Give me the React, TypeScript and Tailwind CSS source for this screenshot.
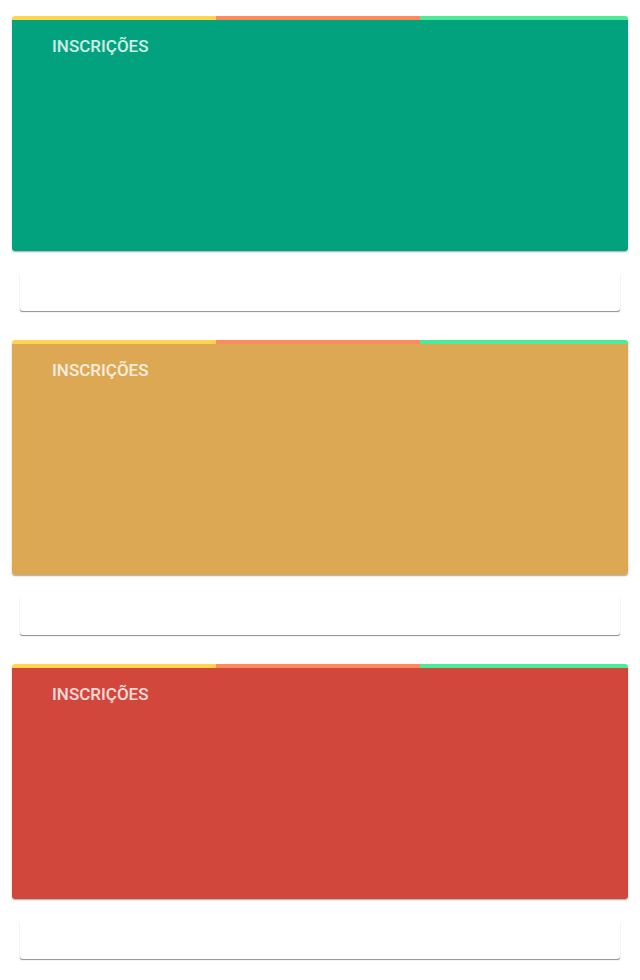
import React from "react";

const cards = [
  { bg: "bg-[#03a27f]" },
  { bg: "bg-[#dda853]" },
  { bg: "bg-[#d2473b]" },
];

function Card({ bg }: { bg: string }) {
  return (
    <div className="mb-[29px]">
      <div className="overflow-hidden rounded-[3px] shadow-[0_1px_1.5px_rgba(0,0,0,0.35)]">
        <div className="flex h-[4px]">
          <div className="w-[204px] bg-[#ffd54f]" />
          <div className="w-[204px] bg-[#ff8a5c]" />
          <div className="flex-1 bg-[#4eea9a]" />
        </div>
        <div className={`${bg} h-[231px] pl-[40px] pt-[14px]`}>
          <div
            className="text-[17px] leading-[24px] font-medium text-white/80"
            style={{ fontFamily: "Roboto, 'Liberation Sans', sans-serif" }}
          >
            INSCRIÇÕES
          </div>
        </div>
      </div>
      <div className="mx-[8px] mt-[20px] h-[40px] bg-white rounded-[3px] shadow-[0_1.5px_1px_-0.5px_rgba(0,0,0,0.45)]" />
    </div>
  );
}

export default function App() {
  return (
    <div className="min-h-[980px] bg-white px-[12px] pt-[16px]">
      {cards.map((c, i) => (
        <Card key={i} bg={c.bg} />
      ))}
    </div>
  );
}
